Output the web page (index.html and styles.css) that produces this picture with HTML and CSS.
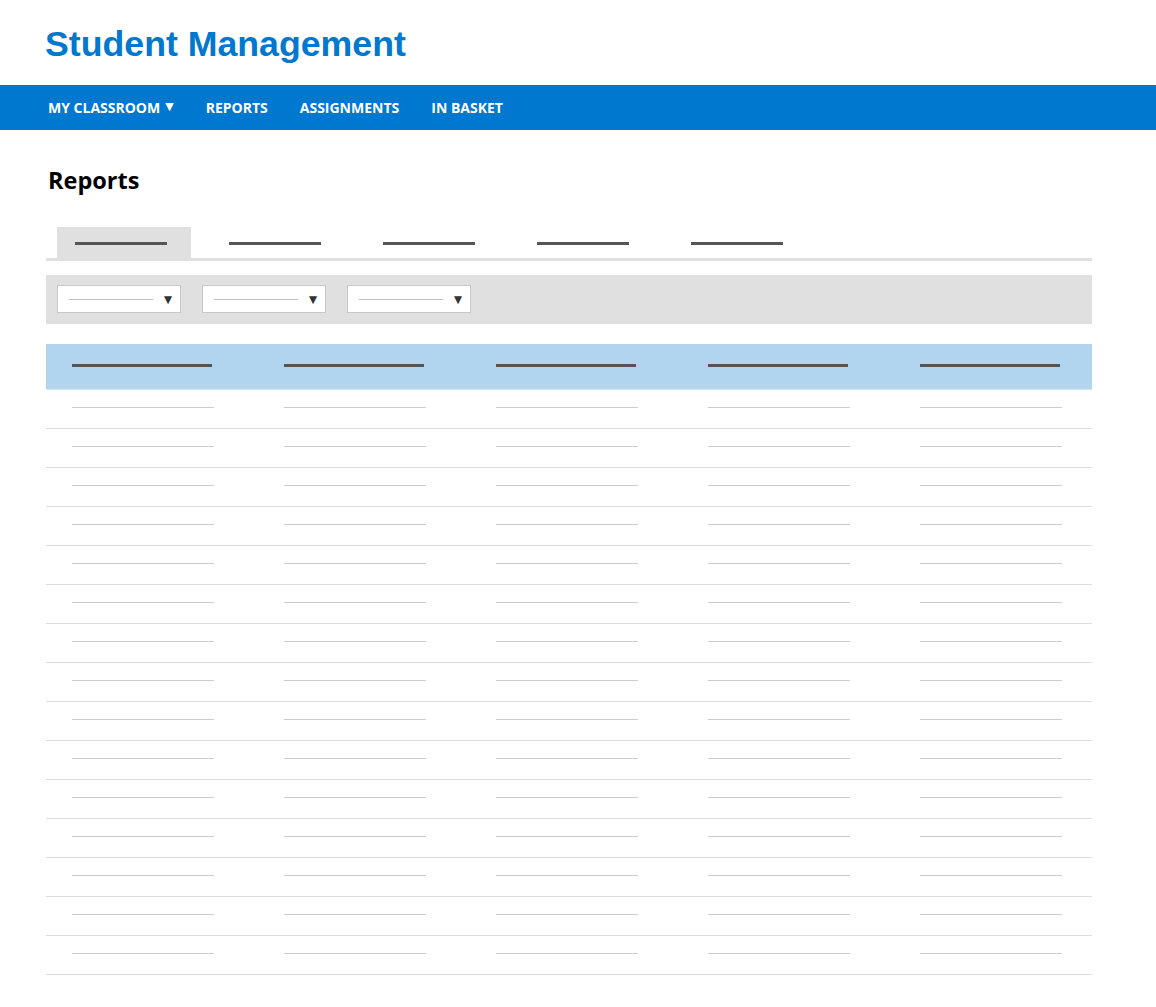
FILE: index.html
```html
<!DOCTYPE html>
<html>
<head>
<meta charset="utf-8">
<link rel="stylesheet" href="styles.css">
</head>
<body>
<header class="masthead">
  <h1 class="brand">Student Management</h1>
</header>
<nav class="navbar">
  <a class="nav-item">MY CLASSROOM <span class="caret">▼</span></a>
  <a class="nav-item">REPORTS</a>
  <a class="nav-item">ASSIGNMENTS</a>
  <a class="nav-item">IN BASKET</a>
</nav>
<main class="content">
  <h2 class="page-title">Reports</h2>
  <div class="tabs">
    <div class="tab active"><span class="bar"></span></div>
    <div class="tab"><span class="bar"></span></div>
    <div class="tab"><span class="bar"></span></div>
    <div class="tab"><span class="bar"></span></div>
    <div class="tab"><span class="bar"></span></div>
  </div>
  <div class="filters">
    <div class="select"><span class="ph"></span><span class="arrow">▼</span></div>
    <div class="select"><span class="ph"></span><span class="arrow">▼</span></div>
    <div class="select"><span class="ph"></span><span class="arrow">▼</span></div>
  </div>
  <div class="table" id="table">
    <div class="row head">
      <div class="cell"><span class="hbar"></span></div>
      <div class="cell"><span class="hbar"></span></div>
      <div class="cell"><span class="hbar"></span></div>
      <div class="cell"><span class="hbar"></span></div>
      <div class="cell"><span class="hbar"></span></div>
    </div>
  </div>
</main>
<script>
  var t = document.getElementById('table');
  for (var r = 0; r < 15; r++) {
    var row = document.createElement('div');
    row.className = 'row body';
    for (var c = 0; c < 5; c++) {
      var cell = document.createElement('div');
      cell.className = 'cell';
      var b = document.createElement('span');
      b.className = 'bbar';
      cell.appendChild(b);
      row.appendChild(cell);
    }
    t.appendChild(row);
  }
</script>
</body>
</html>
```

FILE: styles.css
```css
html, body {
  margin: 0;
  padding: 0;
  background: #ffffff;
}
body {
  font-family: "Open Sans", "Noto Sans", sans-serif;
}
.masthead {
  height: 85px;
  display: flex;
  align-items: center;
  padding-left: 45px;
  box-sizing: border-box;
}
.brand {
  margin: 0;
  font-family: "Liberation Sans", Arial, sans-serif;
  font-weight: 700;
  font-size: 35.7px;
  color: #0078d0;
  line-height: 1;
  position: relative;
  top: 2px;
}
.navbar {
  height: 45px;
  background: #0078d0;
  display: flex;
  align-items: center;
  gap: 32px;
  padding-left: 48px;
}
.nav-item {
  color: #ffffff;
  font-weight: 700;
  font-size: 14px;
  letter-spacing: 0;
  line-height: 1;
  display: flex;
  align-items: center;
}
.caret {
  font-family: "DejaVu Sans", sans-serif;
  font-size: 11px;
  margin-left: 5px;
  line-height: 1;
  position: relative;
  top: -1px;
}
.content {
  padding: 0 64px 0 46px;
}
.page-title {
  margin: 0;
  padding-top: 35px;
  padding-left: 2px;
  height: 97px;
  box-sizing: border-box;
  font-size: 23.5px;
  font-weight: 700;
  color: #000;
  line-height: 30px;
  letter-spacing: 0;
}
.tabs {
  display: flex;
  gap: 20px;
  padding-left: 11px;
  border-bottom: 3px solid #e0e0e0;
  height: 31px;
}
.tab {
  width: 134px;
  height: 31px;
  display: flex;
  align-items: center;
  padding-left: 18px;
  box-sizing: border-box;
}
.tab.active {
  background: #e0e0e0;
}
.bar {
  display: block;
  width: 92px;
  height: 3px;
  background: #555555;
  position: relative;
  top: 1px;
}
.filters {
  margin-top: 14px;
  height: 49px;
  background: #e0e0e0;
  display: flex;
  align-items: center;
  gap: 21px;
  padding-left: 11px;
}
.select {
  width: 124px;
  height: 28px;
  box-sizing: border-box;
  background: #ffffff;
  border: 1px solid #c8c8c8;
  display: flex;
  align-items: center;
  padding-left: 11px;
  position: relative;
  top: -0.5px;
}
.ph {
  display: block;
  width: 84px;
  height: 1px;
  background: #c0c0c0;
}
.arrow {
  font-family: "DejaVu Sans", sans-serif;
  font-size: 10.5px;
  color: #333333;
  margin-left: 11px;
  line-height: 1;
}
.table {
  margin-top: 20px;
}
.row {
  display: grid;
  grid-template-columns: repeat(4, 212px) 198px;
}
.row.head {
  height: 46px;
  box-sizing: border-box;
  background: #b1d5ef;
  border-bottom: 1px solid #d6e7f4;
  align-items: center;
}
.row.body {
  height: 39px;
  box-sizing: border-box;
  border-bottom: 1px solid #dddddd;
}
.cell {
  padding-left: 26px;
}
.hbar {
  display: block;
  width: 140px;
  height: 3px;
  background: #555555;
  position: relative;
  top: -1px;
}
.bbar {
  display: block;
  width: 142px;
  height: 1px;
  background: #cccccc;
  margin-top: 17px;
}
```
